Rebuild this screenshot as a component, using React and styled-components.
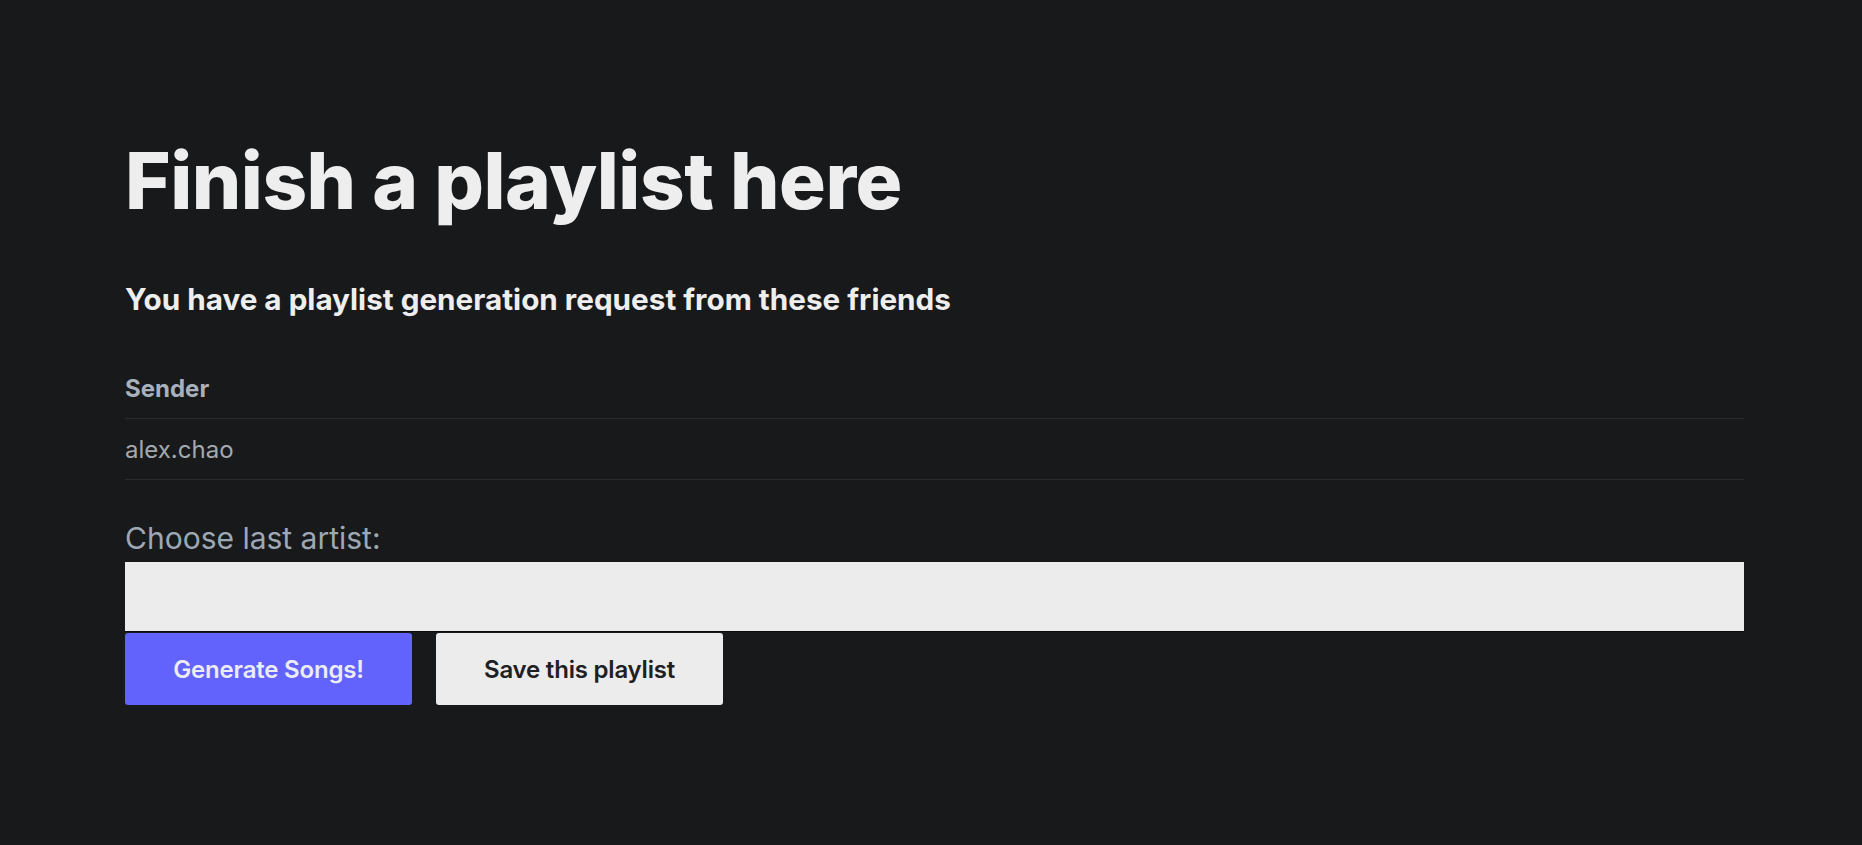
import React from "react";
import styled, { createGlobalStyle } from "styled-components";

const GlobalStyle = createGlobalStyle`
  html, body {
    margin: 0;
    padding: 0;
    background: #18191b;
  }
  body {
    font-family: Inter, "Noto Sans", sans-serif;
    color: #ededed;
  }
`;

const Page = styled.main`
  min-height: 845px;
  box-sizing: border-box;
  padding: 134px 118px 0 125px;
  background: #18191b;
`;

const Title = styled.h1`
  margin: 0;
  font-size: 78px;
  line-height: 94px;
  font-weight: 800;
  letter-spacing: -0.5px;
  color: #eeeeee;
`;

const Subtitle = styled.h2`
  margin: 53px 0 0;
  font-size: 29.7px;
  line-height: 36px;
  font-weight: 700;
  color: #eeeeee;
`;

const Table = styled.table`
  width: 100%;
  margin-top: 41px;
  border-collapse: collapse;
`;

const HeadCell = styled.th`
  text-align: left;
  padding: 16px 0 15px;
  font-size: 24px;
  line-height: 29px;
  font-weight: 700;
  color: #a7b1bc;
  border-bottom: 1px solid #2b2c2f;
`;

const Cell = styled.td`
  text-align: left;
  padding: 16px 0 15px;
  font-size: 24px;
  line-height: 29px;
  font-weight: 400;
  color: #a3a9b0;
  border-bottom: 1px solid #2b2c2f;
`;

const Label = styled.label`
  display: block;
  margin-top: 40px;
  font-size: 30px;
  line-height: 36px;
  font-weight: 400;
  color: #9da8b4;
`;

const Input = styled.input`
  display: block;
  box-sizing: border-box;
  width: 100%;
  height: 70px;
  margin-top: 6px;
  padding: 0 16px;
  border: none;
  border-bottom: 1px solid #0c0c0d;
  background: #ececec;
  font-family: inherit;
  font-size: 24px;
  color: #1d1f22;
  outline: none;
`;

const Actions = styled.div`
  display: flex;
  gap: 24px;
  margin-top: 1px;
`;

const Button = styled.button`
  width: 287px;
  height: 72px;
  border: none;
  border-radius: 3px;
  font-family: inherit;
  font-size: 24px;
  font-weight: 600;
  letter-spacing: -0.2px;
  cursor: pointer;
  background: ${(p) => (p.$primary ? "#6262fd" : "#ececec")};
  color: ${(p) => (p.$primary ? "#ececf6" : "#1e2023")};
`;

export default function App() {
  return (
    <>
      <GlobalStyle />
      <Page>
        <Title>Finish a playlist here</Title>
        <Subtitle>You have a playlist generation request from these friends</Subtitle>
        <Table>
          <thead>
            <tr>
              <HeadCell>Sender</HeadCell>
            </tr>
          </thead>
          <tbody>
            <tr>
              <Cell>alex.chao</Cell>
            </tr>
          </tbody>
        </Table>
        <Label htmlFor="artist">Choose last artist:</Label>
        <Input id="artist" type="text" />
        <Actions>
          <Button $primary>Generate Songs!</Button>
          <Button>Save this playlist</Button>
        </Actions>
      </Page>
    </>
  );
}
